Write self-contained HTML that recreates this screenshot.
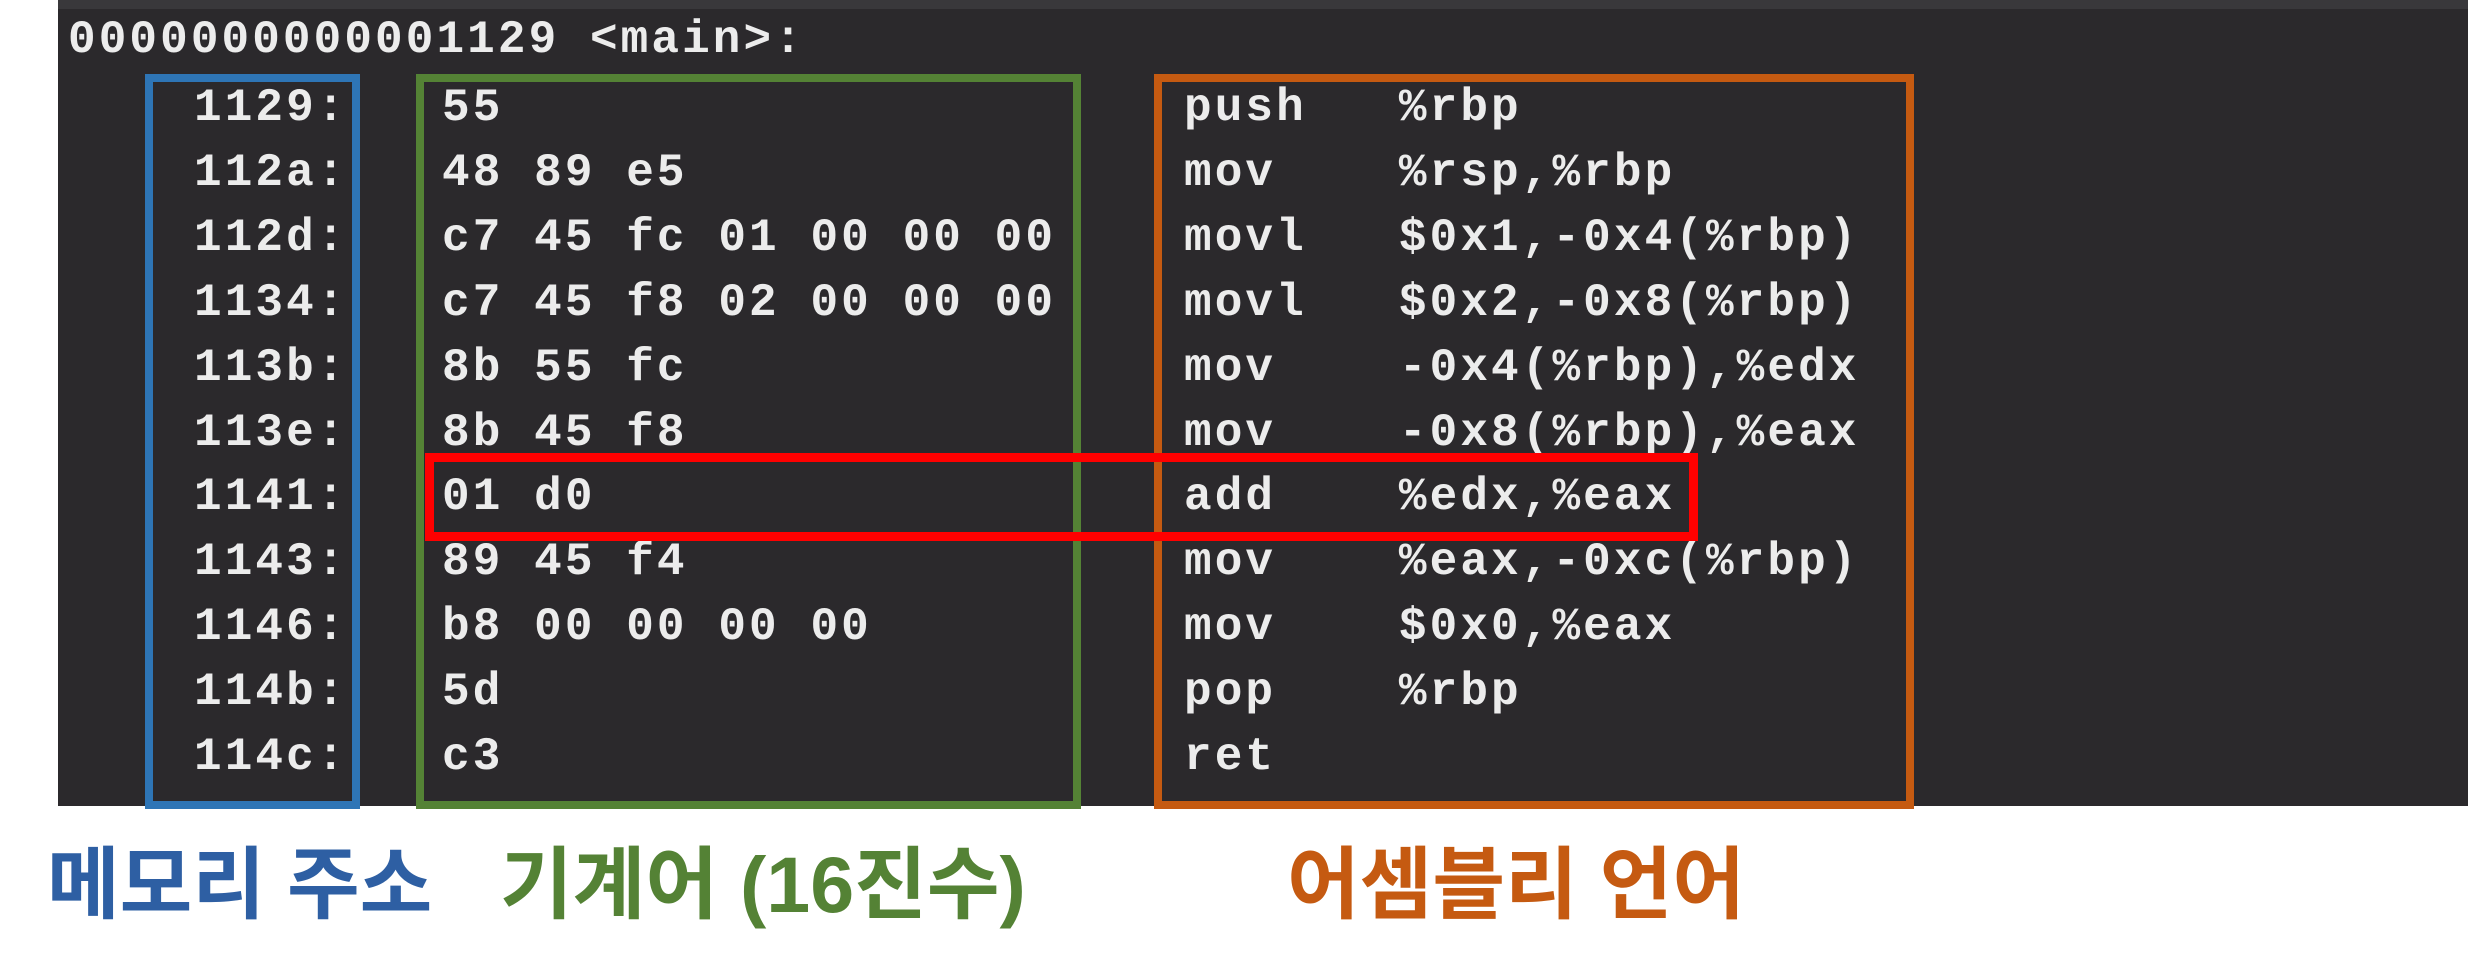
<!DOCTYPE html>
<html><head><meta charset="utf-8"><style>
html,body{margin:0;padding:0;background:#fff;width:2468px;height:975px;overflow:hidden;position:relative}
.panel{position:absolute;left:58px;top:0;width:2410px;height:806px;background:#2b292c}
.top{position:absolute;left:58px;top:0;width:2410px;height:9px;background:#39383b}
.t{position:absolute;font-family:"Liberation Mono",monospace;font-size:46px;letter-spacing:3.1px;color:#ececec;white-space:pre;line-height:50px;font-weight:bold}
.rows{line-height:64.9px}
.box{position:absolute;box-sizing:border-box}
.lbl{position:absolute;font-family:"Liberation Sans","Noto Sans CJK KR",sans-serif;font-weight:bold;font-size:79px;line-height:90px;white-space:pre}
</style></head><body>
<div class="panel"></div><div class="top"></div>
<div class="t" style="left:68px;top:15px">0000000000001129 &lt;main&gt;:</div>

<div class="t rows" style="left:194px;top:76px">1129:
112a:
112d:
1134:
113b:
113e:
1141:
1143:
1146:
114b:
114c:</div>
<div class="t rows" style="left:442px;top:76px">55
48 89 e5
c7 45 fc 01 00 00 00
c7 45 f8 02 00 00 00
8b 55 fc
8b 45 f8
01 d0
89 45 f4
b8 00 00 00 00
5d
c3</div>
<div class="t rows" style="left:1184px;top:76px">push   %rbp
mov    %rsp,%rbp
movl   $0x1,-0x4(%rbp)
movl   $0x2,-0x8(%rbp)
mov    -0x4(%rbp),%edx
mov    -0x8(%rbp),%eax
add    %edx,%eax
mov    %eax,-0xc(%rbp)
mov    $0x0,%eax
pop    %rbp
ret</div>

<div class="box" style="left:145px;top:74px;width:215px;height:735px;border:8px solid #2e75b6"></div>
<div class="box" style="left:416px;top:74px;width:665px;height:735px;border:8px solid #548235"></div>
<div class="box" style="left:1154px;top:74px;width:760px;height:735px;border:8px solid #c55a11"></div>
<div class="box" style="left:425px;top:453px;width:1273px;height:88px;border:9px solid #ff0000"></div>

<div class="lbl" style="left:47px;top:840px;color:#2e5fa3">메모리 주소</div>
<div class="lbl" style="left:500px;top:840px;color:#548235">기계어 (16진수)</div>
<div class="lbl" style="left:1287px;top:840px;color:#c55a11">어셈블리 언어</div>
</body></html>
